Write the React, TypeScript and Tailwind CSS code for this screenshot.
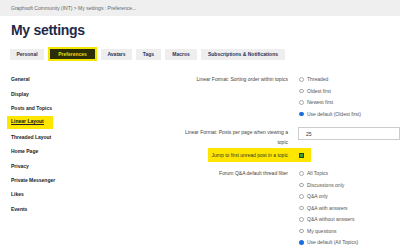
const navItems = [
  'General',
  'Display',
  'Posts and Topics',
  'Linear Layout',
  'Threaded Layout',
  'Home Page',
  'Privacy',
  'Private Messenger',
  'Likes',
  'Events',
];

const tabs = [
  { label: 'Personal', w: 'w-[34px]' },
  { label: 'Preferences', w: 'w-[49px]', active: true },
  { label: 'Avatars', w: 'w-[31px]' },
  { label: 'Tags', w: 'w-[25px]' },
  { label: 'Macros', w: 'w-[32px]' },
  { label: 'Subscriptions & Notifications', w: 'w-[84px]' },
];

const sortOptions = ['Threaded', 'Oldest first', 'Newest first', 'Use default (Oldest first)'];
const qaOptions = [
  'All Topics',
  'Discussions only',
  'Q&A only',
  'Q&A with answers',
  'Q&A without answers',
  'My questions',
  'Use default (All Topics)',
];

function Radio({ label, checked }: { label: string; checked?: boolean }) {
  return (
    <div className="flex h-[11.5px] items-center">
      <span
        className={
          checked
            ? 'ml-[1px] h-[4.5px] w-[4.5px] rounded-full bg-[#1a6fe0]'
            : 'ml-[1px] h-[4.5px] w-[4.5px] rounded-full border-[0.5px] border-[#aaa] bg-white'
        }
      />
      <span className="ml-[3.5px] text-[#555]">{label}</span>
    </div>
  );
}

function Label({ children }: { children: React.ReactNode }) {
  return <div className="w-[168px] shrink-0 pr-[10px] text-right text-[#444]">{children}</div>;
}

export default function App() {
  return (
    <div
      className="h-[249px] w-[400px] overflow-hidden bg-white text-[5px] leading-[6px]"
      style={{ fontFamily: '"Liberation Sans", Arial, sans-serif' }}
    >
      <div className="flex h-[16px] items-center bg-[#efefef] px-[11px] text-[#666]">
        Graphsoft Community (INT) &gt; My settings : Preference...
      </div>

      <h1 className="mt-[6px] h-[16px] px-[11px] text-[14px] font-bold leading-[16px] tracking-[-0.3px] text-[#1f2a4a]">
        My settings
      </h1>

      <div className="mt-[9px] flex h-[14px] items-center gap-[4px] pl-[10px]">
        {tabs.map(t =>
          t.active ? (
            <div
              key={t.label}
              className={`${t.w} flex h-[14px] items-center justify-center border-2 border-[#f2e600] bg-[#2d2d06] font-bold text-[#e6df10]`}
            >
              {t.label}
            </div>
          ) : (
            <div
              key={t.label}
              className={`${t.w} flex h-[11px] items-center justify-center bg-[#eeeeee] font-bold text-[#2a3358]`}
            >
              {t.label}
            </div>
          ),
        )}
      </div>

      <div className="mt-[11px] flex">
        <div className="w-[130px] shrink-0 pl-[7px]">
          {navItems.map(item => (
            <div key={item} className="flex h-[14.4px] items-center">
              {item === 'Linear Layout' ? (
                <span className="flex h-[13px] w-[46px] items-center bg-[#ffe600] px-[4px] font-bold text-[#111]">
                  <span className="border-b-[1.5px] border-[#222] leading-[5px]">{item}</span>
                </span>
              ) : (
                <span className="px-[4px] font-bold text-[#222]">{item}</span>
              )}
            </div>
          ))}
        </div>

        <div className="flex-1 pt-[1.5px]">
          <div className="flex">
            <Label>
              <div className="flex h-[11.5px] items-center justify-end">Linear Format: Sorting order within topics</div>
            </Label>
            <div>
              {sortOptions.map((o, i) => (
                <Radio key={o} label={o} checked={i === sortOptions.length - 1} />
              ))}
            </div>
          </div>

          <div className="mt-[7.5px] flex h-[20px]">
            <Label>
              <div className="leading-[10px]">
                Linear Format: Posts per page when viewing a
                <br />
                topic
              </div>
            </Label>
            <div className="flex h-[13px] flex-1 items-center border-[0.5px] border-[#ccc] bg-white pl-[7px] text-[#333]">
              25
            </div>
          </div>

          <div className="mt-[1px] flex h-[14px]">
            <div className="flex w-[168px] shrink-0 justify-end">
              <span className="flex h-[14px] items-center bg-[#ffe600] pl-[4px] pr-[10px] text-[#333]">
                Jump to first unread post in a topic
              </span>
            </div>
            <div className="flex h-[14px] w-[13px] items-center bg-[#ffe600]">
              <span className="ml-[1px] h-[5px] w-[5px] border-[0.5px] border-[#1b4d1b] bg-[#3d9a35]" />
            </div>
          </div>

          <div className="mt-[5.5px] flex">
            <Label>
              <div className="flex h-[11.5px] items-center justify-end">Forum Q&amp;A default thread filter</div>
            </Label>
            <div>
              {qaOptions.map((o, i) => (
                <Radio key={o} label={o} checked={i === qaOptions.length - 1} />
              ))}
            </div>
          </div>
        </div>
      </div>
    </div>
  );
}
